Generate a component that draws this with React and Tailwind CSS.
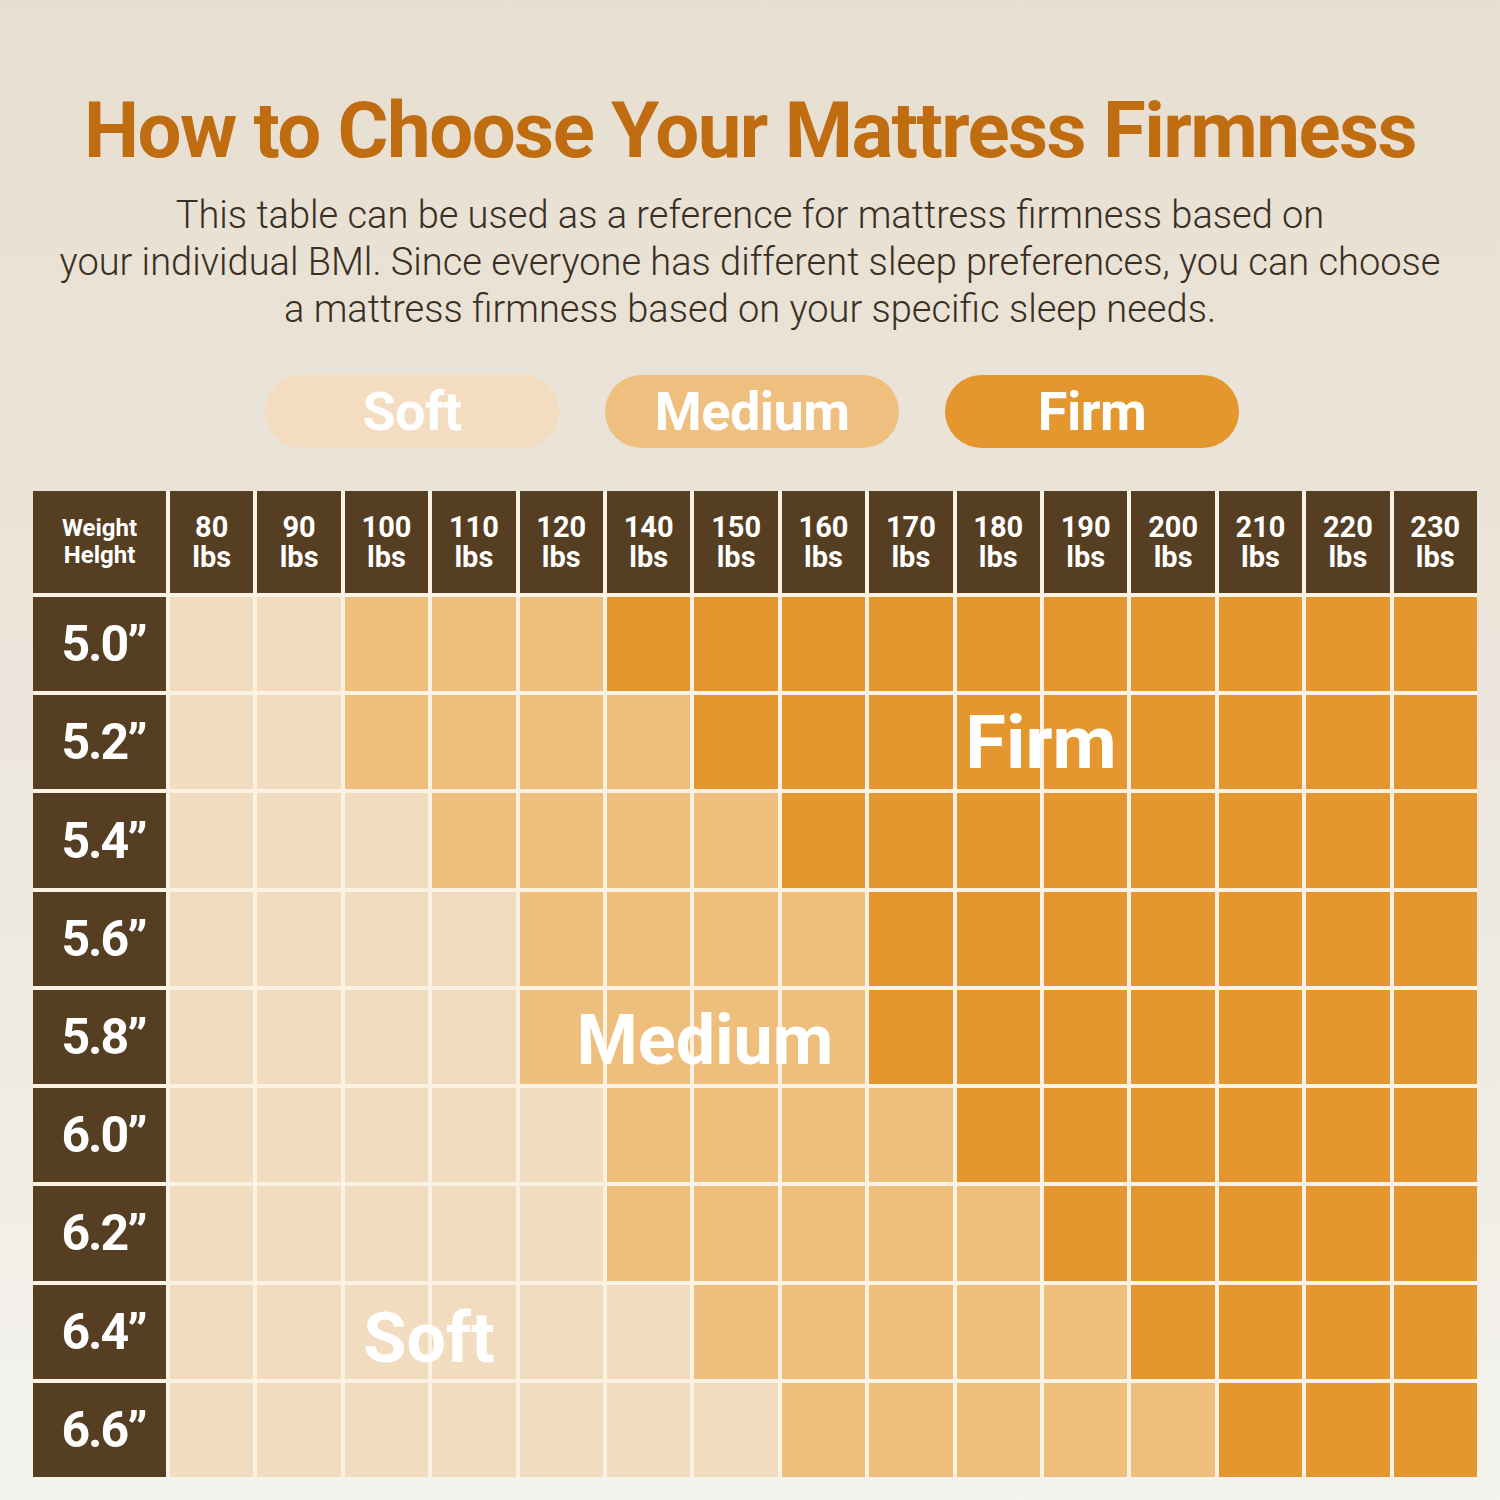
import React from 'react';

const weights = [80, 90, 100, 110, 120, 140, 150, 160, 170, 180, 190, 200, 210, 220, 230];

// 0 = soft, 1 = medium, 2 = firm
const rows = [
  { h: '5.0', cells: [0, 0, 1, 1, 1, 2, 2, 2, 2, 2, 2, 2, 2, 2, 2] },
  { h: '5.2', cells: [0, 0, 1, 1, 1, 1, 2, 2, 2, 2, 2, 2, 2, 2, 2] },
  { h: '5.4', cells: [0, 0, 0, 1, 1, 1, 1, 2, 2, 2, 2, 2, 2, 2, 2] },
  { h: '5.6', cells: [0, 0, 0, 0, 1, 1, 1, 1, 2, 2, 2, 2, 2, 2, 2] },
  { h: '5.8', cells: [0, 0, 0, 0, 1, 1, 1, 1, 2, 2, 2, 2, 2, 2, 2] },
  { h: '6.0', cells: [0, 0, 0, 0, 0, 1, 1, 1, 1, 2, 2, 2, 2, 2, 2] },
  { h: '6.2', cells: [0, 0, 0, 0, 0, 1, 1, 1, 1, 1, 2, 2, 2, 2, 2] },
  { h: '6.4', cells: [0, 0, 0, 0, 0, 0, 1, 1, 1, 1, 1, 2, 2, 2, 2] },
  { h: '6.6', cells: [0, 0, 0, 0, 0, 0, 0, 1, 1, 1, 1, 1, 2, 2, 2] },
];

const cellColor = ['bg-[#f2dcbf]', 'bg-[#eebe7c]', 'bg-[#e4972f]'];

const font = { fontFamily: 'Roboto, "Noto Sans", sans-serif' };

const Pill = ({ label, color }) => (
  <div className={`w-[294px] h-[73px] rounded-full flex items-center justify-center ${color}`}>
    <span className="text-white font-bold text-[54px] leading-none tracking-[-0.01em]">{label}</span>
  </div>
);

export default function App() {
  return (
    <div
      className="w-[1500px] h-[1500px] bg-linear-to-b from-[#e7dfd1] via-[#ece6dc] to-[#f4f3ee] flex flex-col items-center"
      style={font}
    >
      <h1 className="mt-[92px] text-[78px] leading-[78px] font-bold text-[#c06d12] tracking-[-0.02em] text-center">
        How to Choose Your Mattress Firmness
      </h1>
      <p className="mt-[22px] text-[38px] leading-[47px] font-light text-[#3a2f23] text-center">
        This table can be used as a reference for mattress firmness based on
        <br />
        your individual BMl. Since everyone has different sleep preferences, you can choose
        <br />
        a mattress firmness based on your specific sleep needs.
      </p>

      <div className="mt-[42px] flex gap-[46px] ml-[4px]">
        <Pill label="Soft" color="bg-[#f3dcc0]" />
        <Pill label="Medium" color="bg-[#eebf7e]" />
        <Pill label="Firm" color="bg-[#e5972f]" />
      </div>

      <div className="mt-[43px] self-start ml-[33px] relative w-[1444px] h-[986px] bg-[#fcf2e3] grid grid-cols-[133px_repeat(15,minmax(0,1fr))] grid-rows-[102px_repeat(9,minmax(0,1fr))] gap-[4px]">
        <div className="bg-[#553e22] flex flex-col items-center justify-center text-white font-bold text-[24px] leading-[27px]">
          <span>Weight</span>
          <span>Helght</span>
        </div>
        {weights.map((w) => (
          <div
            key={w}
            className="bg-[#553e22] flex flex-col items-center justify-center text-white font-bold text-[29px] leading-[30px]"
          >
            <span>{w}</span>
            <span>lbs</span>
          </div>
        ))}
        {rows.map((r) => (
          <React.Fragment key={r.h}>
            <div className="bg-[#553e22] flex items-center justify-center pl-[8px] text-white font-bold text-[50px] leading-none tracking-[-0.04em]">
              {r.h}”
            </div>
            {r.cells.map((c, i) => (
              <div key={i} className={cellColor[c]} />
            ))}
          </React.Fragment>
        ))}

        <span className="absolute left-[1008px] top-[215px] -translate-x-1/2 text-white font-bold text-[74px] leading-[74px] pointer-events-none">
          Firm
        </span>
        <span className="absolute left-[672px] top-[514px] -translate-x-1/2 text-white font-bold text-[70px] leading-[70px] pointer-events-none">
          Medium
        </span>
        <span className="absolute left-[396px] top-[812px] -translate-x-1/2 text-white font-bold text-[70px] leading-[70px] pointer-events-none">
          Soft
        </span>
      </div>
    </div>
  );
}
